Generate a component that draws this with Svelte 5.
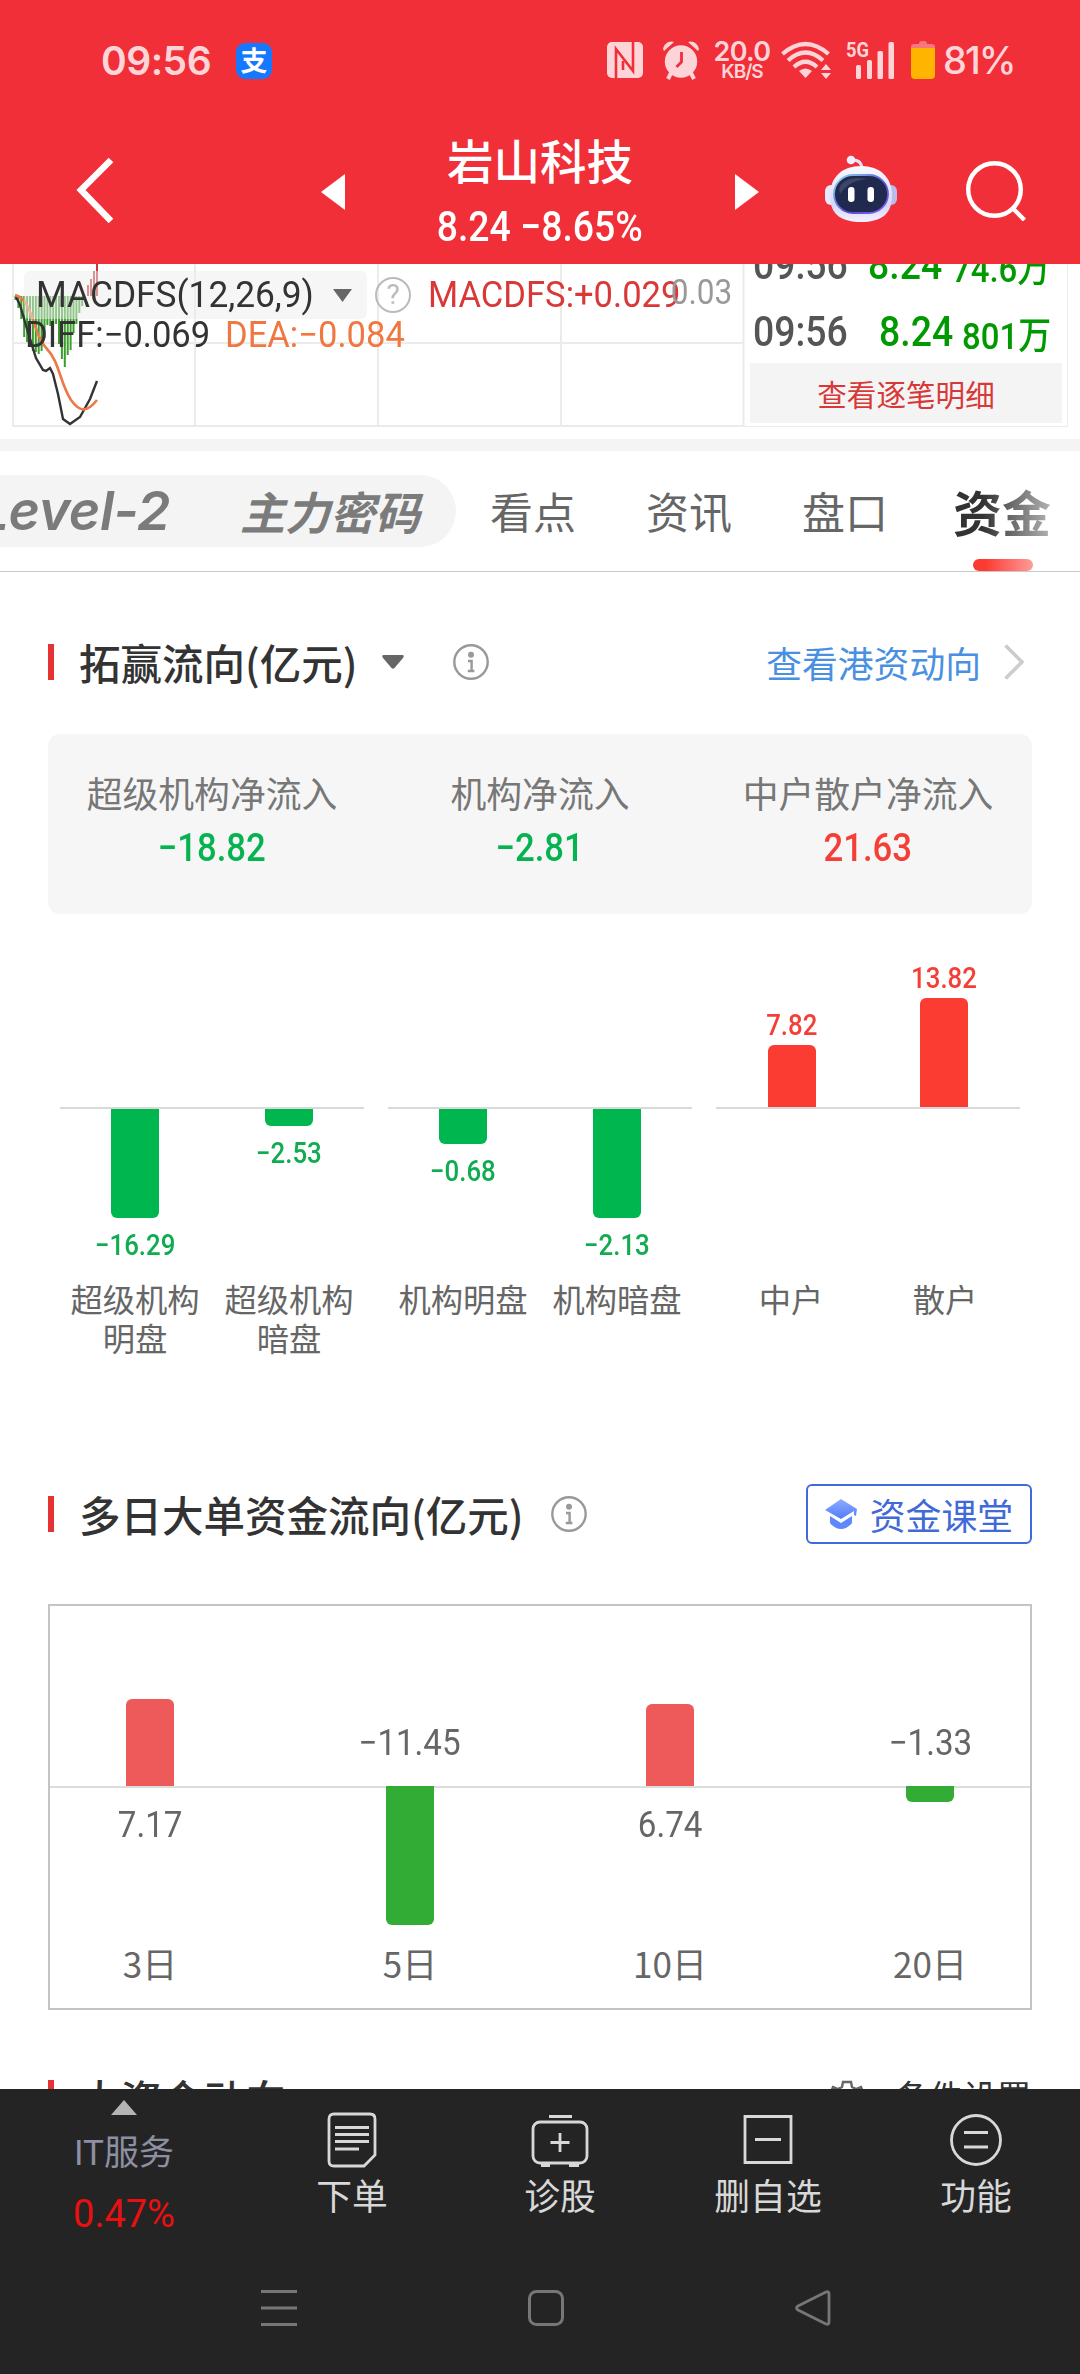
<script lang="ts">
    const ticks = [
        { time: '09:56', price: '8.24', volume: '74.6万' },
        { time: '09:56', price: '8.24', volume: '801万' }
    ];

    const tabs = ['看点', '资讯', '盘口'];

    const summary = [
        { label: '超级机构净流入', value: '−18.82', up: false },
        { label: '机构净流入', value: '−2.81', up: false },
        { label: '中户散户净流入', value: '21.63', up: true }
    ];

    // height is relative to the biggest bar of each group
    const groups = [
        [
            { name: '超级机构明盘', value: '−16.29', height: 109, up: false },
            { name: '超级机构暗盘', value: '−2.53', height: 17, up: false }
        ],
        [
            { name: '机构明盘', value: '−0.68', height: 35, up: false },
            { name: '机构暗盘', value: '−2.13', height: 109, up: false }
        ],
        [
            { name: '中户', value: '7.82', height: 62, up: true },
            { name: '散户', value: '13.82', height: 109, up: true }
        ]
    ];

    const days = [
        { name: '3日', value: '7.17', height: 87, up: true },
        { name: '5日', value: '−11.45', height: 139, up: false },
        { name: '10日', value: '6.74', height: 82, up: true },
        { name: '20日', value: '−1.33', height: 16, up: false }
    ];

    const greenBars = [4, 12, 23, 41, 46, 50, 55, 56, 58, 55, 42, 29, 30, 28, 28, 48, 63, 71, 59, 54, 37, 28, 17, 10];
    const redBars = [11, 17, 25, 40];
</script>

{#snippet info()}
    <svg class="info" width="36" height="36" viewBox="0 0 36 36" fill="none" stroke="#999">
        <circle cx="18" cy="18" r="16.7" stroke-width="2.4" />
        <circle cx="18" cy="10.8" r="3" fill="#999" stroke="none" />
        <path d="M15 17h3.6v10M14.8 27h6.6" stroke-width="2.4" />
    </svg>
{/snippet}

<div class="app">
    <header>
        <div class="status">
            <span class="clock">09:56</span>
            <span class="alipay">支</span>
            <div class="status-right">
                <svg width="36" height="38" viewBox="0 0 36 38">
                    <rect y="1" width="36" height="36" rx="5" fill="#fdd5d8" />
                    <path d="M9 37V8l17 22V14M26 1v29M9 8v29" fill="none" stroke="#f12f38" stroke-width="2.6" />
                    <path d="M16 20v9" stroke="#f12f38" stroke-width="2.6" />
                </svg>
                <svg class="alarm" width="38" height="40" viewBox="0 0 38 40" fill="#fdd5d8">
                    <circle cx="19" cy="21.5" r="16.2" />
                    <path d="M1 9C2 4 7 0 12 2L2 11zM37 9C36 4 31 0 26 2l10 9z" />
                    <path d="M9 33l-3 6M29 33l3 6" stroke="#fdd5d8" stroke-width="4" />
                    <path d="M19.500 12v10l-5 5" fill="none" stroke="#f12f38" stroke-width="2.800" />
                </svg>
                <div class="speed"><b>20.0</b><small>KB/S</small></div>
                <svg class="wifi" width="52" height="38" viewBox="0 0 52 38">
                    <g fill="none" stroke="#fdd5d8" stroke-width="4.200">
                        <path d="M1.500 13Q24.500-7 47.500 13" />
                        <path d="M7 19.500Q24.500 3.500 42 19.500" />
                        <path d="M13 26Q24.500 15.500 36 26" />
                    </g>
                    <path d="M24.500 37l-6.500-7q6.500-5 13 0z" fill="#fdd5d8" />
                    <path d="M40 29l5-6 5 6zM40 32l5 6 5-6z" fill="#fdd5d8" />
                </svg>
                <svg class="signal" width="49" height="38" viewBox="0 0 49 38" fill="#fdd5d8">
                    <text x="0" y="15.500" font-size="20" font-weight="700" textLength="23" lengthAdjust="spacingAndGlyphs">5G</text>
                    <rect x="10" y="24" width="5" height="14" rx="1.500" />
                    <rect x="21" y="19" width="5" height="19" rx="1.500" />
                    <rect x="31.500" y="10" width="5.500" height="28" rx="1.500" />
                    <rect x="42.500" y="1" width="5.500" height="37" rx="1.500" />
                </svg>
                <svg class="battery" width="24" height="38" viewBox="0 0 24 38">
                    <path d="M0 10V6q0-3 3-3h5q0-3 3-3h2q3 0 3 3h5q3 0 3 3v4z" fill="#f8777c" />
                    <path d="M0 7h24v27q0 4-4 4H4q-4 0-4-4z" fill="#ffb400" />
                </svg>
                <span class="percent">81%</span>
            </div>
        </div>
        <div class="titlebar">
            <svg class="back" width="38" height="66" viewBox="0 0 38 66" fill="none" stroke="#fff" stroke-width="6.500">
                <path d="M35 3L5 33l30 31" />
            </svg>
            <svg class="prev" width="24" height="36" viewBox="0 0 24 36"><path d="M24 0v36L0 18z" fill="#fff" /></svg>
            <div class="stock">
                <h1>岩山科技</h1>
                <p><span class="num">8.24 −8.65%</span></p>
            </div>
            <svg class="next" width="24" height="36" viewBox="0 0 24 36"><path d="M0 0v36l24-18z" fill="#fff" /></svg>
            <svg class="robot" width="72" height="68" viewBox="0 0 72 68">
                <defs>
                    <linearGradient id="shell" x1="0" y1="0" x2="0" y2="1">
                        <stop offset="0" stop-color="#fafaff" />
                        <stop offset=".7" stop-color="#d5d8f5" />
                        <stop offset="1" stop-color="#f4f2ff" />
                    </linearGradient>
                    <linearGradient id="rim" x1="0" y1="0" x2="1" y2="1">
                        <stop offset="0" stop-color="#8fdcf0" />
                        <stop offset=".6" stop-color="#5a4bd8" />
                        <stop offset="1" stop-color="#8b5cf0" />
                    </linearGradient>
                </defs>
                <path d="M26 5q10-1 11 8" fill="none" stroke="#e4e2fa" stroke-width="3" />
                <circle cx="26" cy="5" r="4.300" fill="#eeeefc" />
                <rect x="0" y="30" width="14" height="20" rx="6" fill="#e6e8fc" />
                <rect x="58" y="30" width="14" height="20" rx="6" fill="#b9bce8" />
                <path d="M36 11C55 11 67 22 67 41S55 67 36 67 5 60 5 41 17 11 36 11z" fill="url(#shell)" />
                <rect x="9" y="20" width="54" height="38" rx="19" fill="#202a4e" stroke="url(#rim)" stroke-width="1.800" />
                <path d="M14 34q3-10 17-11l14 1q-20 0-30 15z" fill="#4a5272" opacity=".7" />
                <rect x="23" y="32" width="6.500" height="15" rx="3.200" fill="#fff" />
                <rect x="42.500" y="32" width="6.500" height="15" rx="3.200" fill="#fff" />
            </svg>
            <svg class="search" width="60" height="60" viewBox="0 0 60 60" fill="none" stroke="#fff" stroke-width="4.400">
                <circle cx="28.500" cy="28.500" r="26.300" />
                <path d="M46.500 47l12 12" />
            </svg>
        </div>
    </header>

    <main>
        <section class="market">
            <div class="macd">
                <svg class="plot" width="750" height="163" viewBox="0 0 750 163" fill="none">
                    <path d="M13 79h730M12 162h732M13 0v163M195 0v163M378 0v163M561 0v163M743.500 0v163" stroke="#ebebeb" stroke-width="2" />
                    {#each greenBars as bar, i}
                        <path d="M{15.500 + i * 2.9} 32v{bar}" stroke="#3a9d2c" stroke-width="2" />
                    {/each}
                    {#each redBars as bar, i}
                        <path d="M{88 + i * 3} 32v-{bar}" stroke="#cc3636" stroke-width="2" />
                    {/each}
                    <path d="M16 33L20 41L27 65L36 94L43 106L46 107L50 104L53 110L58 130L63 155L70 160L80 153L90 135L97 117" stroke="#333" stroke-width="2.400" />
                    <path d="M15 31Q23 33 28 43C36 61 37 74 47 85C59 97 60 119 71 136C79 147 86 150 97 136" stroke="#ec7a47" stroke-width="2.600" />
                </svg>
                <div class="legend">
                    <div class="legend-row">
                        <div class="picker">
                            <span class="macd-name">MACDFS(12,26,9)</span>
                            <svg width="19" height="13" viewBox="0 0 19 13"><path d="M0 0h19L9.500 13z" fill="#666" /></svg>
                        </div>
                        <span class="help">?</span>
                        <span class="macd-value">MACDFS:+0.029</span>
                    </div>
                    <div class="legend-row second">
                        <span class="diff">DIFF:−0.069</span>
                        <span class="dea">DEA:−0.084</span>
                    </div>
                </div>
                <span class="axis-max">0.03</span>
            </div>
            <div class="ticks">
                {#each ticks as tick}
                    <div class="tick">
                        <span class="tick-time">{tick.time}</span>
                        <span class="tick-price">{tick.price}</span>
                        <span class="tick-volume">{tick.volume}</span>
                    </div>
                {/each}
                <button class="detail">查看逐笔明细</button>
            </div>
        </section>

        <nav class="tabs">
            <div class="pill">
                <span class="level">Level-2</span>
                <span class="code">主力密码</span>
            </div>
            {#each tabs as tab}
                <span class="tab">{tab}</span>
            {/each}
            <span class="tab active"><span>资金</span></span>
        </nav>

        <section class="flow">
            <div class="head">
                <h2>拓赢流向(亿元)</h2>
                <svg class="caret" width="22" height="14" viewBox="0 0 22 14"><path d="M2 0h18q3 0 1 3l-8.500 10q-1.500 1.500-3 0L1 3q-2-3 1-3z" fill="#666" /></svg>
                {@render info()}
                <a class="more" href="#flow">查看港资动向</a>
                <svg class="arrow" width="21" height="36" viewBox="0 0 21 36" fill="none" stroke="#ccc" stroke-width="3.600">
                    <path d="M1.500 1.500L18 18 1.500 34.500" />
                </svg>
            </div>
            <div class="card">
                {#each summary as item}
                    <div class="cell">
                        <span class="cell-label">{item.label}</span>
                        <span class="cell-value" class:up={item.up}>{item.value}</span>
                    </div>
                {/each}
            </div>
            <div class="groups">
                {#each groups as group}
                    <div class="group">
                        {#each group as bar}
                            <div class="item">
                                <div class="upper">
                                    {#if bar.up}
                                        <span class="bar-value">{bar.value}</span>
                                        <i style:height="{bar.height}px"></i>
                                    {/if}
                                </div>
                                <div class="lower">
                                    {#if !bar.up}
                                        <i style:height="{bar.height}px"></i>
                                        <span class="bar-value">{bar.value}</span>
                                    {/if}
                                </div>
                                <span class="bar-name">{bar.name}</span>
                            </div>
                        {/each}
                    </div>
                {/each}
            </div>
        </section>

        <section class="multi">
            <div class="head">
                <h2>多日大单资金流向(亿元)</h2>
                {@render info()}
                <button class="course">
                    <svg width="34" height="32" viewBox="0 0 34 32">
                        <defs>
                            <linearGradient id="cap" x1="0" y1="0" x2="0" y2="1">
                                <stop offset="0" stop-color="#8fadff" />
                                <stop offset="1" stop-color="#4f7cff" />
                            </linearGradient>
                        </defs>
                        <path d="M17 1l16 10-1 7-2-1v-4L17 21 1 12z" fill="url(#cap)" />
                        <path d="M6 18l11 7 11-7v7q-5 6-11 6T6 25z" fill="#5e88fb" />
                    </svg>
                    资金课堂
                </button>
            </div>
            <div class="frame">
                {#each days as day}
                    <div class="item">
                        <div class="upper">
                            {#if day.up}
                                <i style:height="{day.height}px"></i>
                            {:else}
                                <span class="day-value">{day.value}</span>
                            {/if}
                        </div>
                        <div class="lower">
                            {#if day.up}
                                <span class="day-value">{day.value}</span>
                            {:else}
                                <i style:height="{day.height}px"></i>
                            {/if}
                        </div>
                        <span class="day-name">{day.name}</span>
                    </div>
                {/each}
            </div>
        </section>

        <section class="big">
            <div class="head">
                <h2>大资金动向</h2>
                <svg class="gear" width="34" height="36" viewBox="0 0 34 36" fill="none" stroke="#666" stroke-width="2.400">
                    <path d="M13 2h8l1 5 4 2 5-2 3 7-4 4 4 4-3 7-5-2-4 2-1 5h-8l-1-5-4-2-5 2-3-7 4-4-4-4 3-7 5 2 4-2z" />
                    <circle cx="17" cy="18" r="5" />
                </svg>
                <span class="setting">条件设置</span>
            </div>
        </section>
    </main>

    <footer>
        <div class="toolbar">
            <div class="index">
                <svg width="26" height="15" viewBox="0 0 26 15"><path d="M13 0l13 15H0z" fill="#b4b4b4" /></svg>
                <span class="index-name">IT服务</span>
                <span class="index-value">0.47%</span>
            </div>
            <div class="tool">
                <svg width="58" height="56" viewBox="0 0 58 56" fill="none" stroke="#d8d8d8" stroke-width="2.800">
                    <path d="M11 2h36q5 0 5 5v36l-11 11H11q-5 0-5-5V7q0-5 5-5z" />
                    <path d="M12 15.500h34M12 22.500h34M12 29.500h34M12 37h24" />
                </svg>
                <span>下单</span>
            </div>
            <div class="tool">
                <svg width="58" height="56" viewBox="0 0 58 56" fill="none" stroke="#d8d8d8" stroke-width="2.800">
                    <rect x="2" y="10" width="54" height="41" rx="7" />
                    <path d="M18 4.500h23M29 21v19M19.500 30.500h19M10 53.500h9M38 53.500h10" />
                </svg>
                <span>诊股</span>
            </div>
            <div class="tool">
                <svg width="58" height="56" viewBox="0 0 58 56" fill="none" stroke="#d8d8d8" stroke-width="2.800">
                    <path d="M6 4.500h46v46H6zM16 27.500h26" />
                </svg>
                <span>删自选</span>
            </div>
            <div class="tool">
                <svg width="58" height="56" viewBox="0 0 58 56" fill="none" stroke="#d8d8d8" stroke-width="2.800">
                    <circle cx="29" cy="28" r="24.500" />
                    <path d="M17 20.500h24M17 35h24" />
                </svg>
                <span>功能</span>
            </div>
        </div>
        <div class="system">
            <svg width="36" height="36" viewBox="0 0 36 36" stroke="#777" stroke-width="3"><path d="M0 1.500h36M0 18h36M0 34.500h36" /></svg>
            <svg width="36" height="36" viewBox="0 0 36 36" fill="none" stroke="#777" stroke-width="3"><rect x="1.500" y="1.500" width="33" height="33" rx="7" /></svg>
            <svg width="36" height="36" viewBox="0 0 36 36" fill="none" stroke="#777" stroke-width="2.800" stroke-linejoin="round"><path d="M31 2q3-1 3 2v28q0 3-3 2L3 20q-3-2 0-4z" /></svg>
        </div>
    </footer>
</div>

<style>
    :global(body) {
        margin: 0;
        background: #fff;
    }

    .app {
        width: 1080px;
        height: 2374px;
        overflow: hidden;
        color: #333;
        font-family: Roboto, "Noto Sans CJK SC", sans-serif;
    }

    h1, h2, p {
        margin: 0;
        font-weight: 500;
    }

    svg {
        display: block;
        flex: none;
    }

    button {
        padding: 0;
        font-family: inherit;
    }

    .app span {
        white-space: nowrap;
    }

    header {
        height: 264px;
        background: #f12f38;
        color: #fff;
    }

    .status {
        display: flex;
        align-items: center;
        height: 120px;
        padding: 0 67px 0 101px;
        color: #fdd5d8;
    }

    .clock {
        width: 135px;
        font: 600 39px/1 Inter, sans-serif;
        letter-spacing: -0.5px;
    }

    .alipay {
        width: 36px;
        height: 36px;
        margin-top: 2px;
        border-radius: 9px;
        background: #1677ff;
        color: #fff;
        font: 700 27px/33px "Noto Sans CJK SC", sans-serif;
        text-align: center;
    }

    .status-right {
        display: flex;
        align-items: center;
        margin-left: auto;
    }

    .alarm {
        margin-left: 19px;
    }

    .speed {
        display: flex;
        flex-direction: column;
        align-items: center;
        width: 60px;
        margin-left: 12px;
        font-family: Inter, sans-serif;
        line-height: 20px;
    }

    .speed b {
        font-size: 27px;
        font-weight: 600;
        letter-spacing: -0.6px;
        line-height: 22px;
    }

    .speed small {
        font-size: 19px;
        font-weight: 600;
        letter-spacing: -1px;
        line-height: 17px;
    }

    .wifi {
        margin-left: 9px;
    }

    .signal {
        margin-left: 13px;
    }

    .battery {
        margin: 0 8px 0 16px;
    }

    .percent {
        width: 70px;
        font: 500 38px/1 Inter, sans-serif;
        letter-spacing: -2px;
    }

    .titlebar {
        display: flex;
        align-items: center;
        height: 144px;
        padding: 0 54px 0 76px;
    }

    .back {
        margin-top: -4px;
    }

    .prev {
        margin-left: 207px;
    }

    .stock {
        width: 390px;
        text-align: center;
    }

    .stock h1 {
        margin-top: 4px;
        font-size: 46.5px;
        line-height: 66px;
    }

    .stock p {
        font-size: 42px;
        line-height: 62px;
        white-space: nowrap;
    }

    .num {
        display: inline-block;
        transform: scaleX(0.89);
    }

    .robot {
        margin: -6px 0 0 66px;
    }

    .search {
        margin: -2px 0 0 69px;
    }

    main {
        height: 1825px;
        overflow: hidden;
    }

    .market {
        display: flex;
        height: 163px;
        padding-bottom: 12px;
        border-bottom: 12px solid #f4f4f4;
    }

    .macd {
        position: relative;
        width: 744px;
    }

    .plot,
    .legend {
        position: absolute;
        top: 0;
        left: 0;
    }

    .legend {
        padding: 7px 0 0 24px;
    }

    .legend-row {
        display: flex;
        align-items: center;
        height: 48px;
        font-size: 36px;
    }

    .legend-row span {
        transform-origin: left;
    }

    .picker {
        display: flex;
        align-items: center;
        justify-content: space-between;
        box-sizing: border-box;
        width: 343px;
        height: 48px;
        padding: 0 15px 0 12px;
        border-radius: 6px;
        background: rgba(238, 238, 238, 0.5);
    }

    .macd-name {
        width: 287px;
        transform: scaleX(0.98);
    }

    .help {
        box-sizing: border-box;
        width: 36px;
        height: 36px;
        margin: 0 17px 0 8px;
        border: 2.5px solid #bbb;
        border-radius: 50%;
        color: #bbb;
        font-size: 28px;
        line-height: 32px;
        text-align: center;
    }

    .macd-value {
        color: #d93838;
        transform: scaleX(0.96);
    }

    .second {
        height: 34px;
        margin-top: -1px;
    }

    .diff {
        width: 200px;
        margin-left: 1px;
        transform: scaleX(0.96);
    }

    .dea {
        color: #f07840;
        transform: scaleX(0.96);
    }

    .axis-max {
        position: absolute;
        top: 8px;
        right: 12px;
        color: #999;
        font-size: 35px;
        transform: scaleX(0.9);
        transform-origin: right;
    }

    .ticks {
        display: flex;
        flex-direction: column;
        justify-content: flex-end;
        box-sizing: border-box;
        width: 324px;
        padding: 0 5px 3px 6px;
        border: solid #ebebeb;
        border-width: 0 1px 1px 0;
        overflow: hidden;
    }

    .tick {
        display: flex;
        flex: none;
        align-items: center;
        height: 67px;
        padding-left: 3px;
        font-size: 42px;
        font-weight: 500;
    }

    .tick span {
        transform: scaleX(0.89);
        transform-origin: left;
    }

    .tick-time {
        width: 128px;
        color: #555;
    }

    .tick-price {
        width: 85px;
        color: #009900;
    }

    .tick-volume {
        margin-top: 3px;
        color: #009900;
        font-size: 37px;
    }

    .detail {
        flex: none;
        height: 60px;
        margin-top: -2px;
        border: 0;
        background: #f4f4f4;
        color: #d93838;
        font-size: 29.6px;
    }

    .tabs {
        display: flex;
        align-items: center;
        height: 120px;
        border-bottom: 1px solid #c8c8c8;
        color: #666;
        font-size: 43px;
    }

    .pill {
        display: flex;
        align-items: center;
        justify-content: flex-end;
        box-sizing: border-box;
        width: 456px;
        height: 72px;
        margin-right: 34px;
        padding-right: 36px;
        border-radius: 0 36px 36px 0;
        background: #f4f4f4;
        color: #7b7b7b;
        font-style: italic;
        font-weight: 700;
    }

    .level {
        font: italic 600 54px/1 Inter, sans-serif;
        letter-spacing: -0.5px;
    }

    .code {
        margin: -2px 0 0 70px;
        font-size: 45px;
    }

    .tab {
        position: relative;
        width: 87px;
        margin: -2px 69px 0 0;
    }

    .tab.active {
        margin: -2px 0 0 -5px;
        font-size: 49px;
        font-weight: 700;
    }

    .tab.active span {
        background: linear-gradient(90deg, #333 30%, #aaa 95%);
        background-clip: text;
        color: transparent;
    }

    .tab.active::after {
        content: "";
        position: absolute;
        bottom: -25px;
        left: 20px;
        width: 60px;
        height: 12px;
        border-radius: 6px;
        background: linear-gradient(90deg, #fb3a32 20%, #ff9c98);
    }

    .flow,
    .multi,
    .big {
        padding: 0 48px;
    }

    .head {
        display: flex;
        align-items: center;
    }

    .head h2 {
        display: flex;
        align-items: center;
        height: 36px;
        padding-left: 25px;
        border-left: 6px solid #e53333;
        font: 500 41.5px/36px "Noto Sans CJK SC", sans-serif;
    }

    .flow .head {
        height: 144px;
        padding-top: 18px;
    }

    .caret {
        margin: 0 49px 0 24px;
    }

    .more {
        margin: 0 23px 0 auto;
        color: #4a90e2;
        font-size: 35.8px;
        text-decoration: none;
    }

    .arrow {
        margin-right: 7px;
    }

    .card {
        display: grid;
        grid-template-columns: repeat(3, 1fr);
        height: 180px;
        border-radius: 12px;
        background: #f6f6f6;
    }

    .cell {
        display: flex;
        flex-direction: column;
        align-items: center;
        padding-top: 37px;
    }

    .cell-label {
        color: #777;
        font-size: 35.8px;
        line-height: 50px;
    }

    .cell-value {
        color: #07b351;
        font-size: 39px;
        font-weight: 500;
        line-height: 54px;
        transform: scaleX(0.89);
    }

    .cell-value.up {
        color: #f53f36;
    }

    .groups {
        display: flex;
        gap: 20px;
        padding: 0 10px;
    }

    .group {
        display: flex;
        flex: 1;
    }

    .groups .item {
        display: flex;
        flex: 1;
        flex-direction: column;
        align-items: center;
    }

    .upper,
    .lower {
        display: flex;
        flex-direction: column;
        align-items: center;
        width: 100%;
    }

    .upper {
        justify-content: flex-end;
    }

    i {
        width: 48px;
    }

    .upper i {
        border-radius: 6px 6px 0 0;
        background: #fb3c32;
    }

    .lower i {
        border-radius: 0 0 6px 6px;
        background: #00b64f;
    }

    .groups .upper {
        width: 152px;
        height: 193px;
        border-bottom: 2px solid #d9d9d9;
    }

    .groups .item:first-child .upper {
        align-self: flex-end;
    }

    .groups .item:last-child .upper {
        align-self: flex-start;
    }

    .groups .lower {
        height: 173px;
    }

    .bar-value {
        margin-bottom: 2px;
        color: #f53f36;
        font-size: 29px;
        font-weight: 500;
        line-height: 36px;
        transform: scaleX(0.89);
    }

    .lower .bar-value {
        margin-top: 9px;
        color: #10ac52;
    }

    .groups .bar-name {
        width: 131px;
        color: #666;
        font-size: 32.3px;
        line-height: 39px;
        text-align: center;
        white-space: normal;
    }

    .multi .head {
        height: 60px;
        margin: 124px 0 60px;
    }

    .multi .info {
        margin-left: 27px;
    }

    .course {
        display: flex;
        align-items: center;
        gap: 12px;
        height: 60px;
        margin-left: auto;
        padding: 0 17px 0 16px;
        border: 2px solid #3f6ad8;
        border-radius: 6px;
        background: #fff;
        color: #3f6ad8;
        font-size: 35.8px;
    }

    .frame {
        display: flex;
        gap: 60px;
        box-sizing: border-box;
        height: 406px;
        border: 2px solid #c4c4c4;
        background: linear-gradient(#dcdcdc, #dcdcdc) 0 180px / 100% 2px no-repeat;
    }

    .frame .item {
        display: flex;
        flex-direction: column;
        align-items: center;
        width: 200px;
    }

    .frame .upper {
        height: 180px;
    }

    .frame .lower {
        height: 154px;
    }

    .frame .upper i {
        background: #ee5a5a;
    }

    .frame .lower i {
        background: #33ac36;
    }

    .day-value {
        color: #666;
        font-size: 36px;
        line-height: 44px;
        transform: scaleX(0.92);
    }

    .upper .day-value {
        margin-bottom: 21px;
    }

    .lower .day-value {
        margin-top: 17px;
    }

    .day-name {
        color: #666;
        font-family: "Noto Sans CJK SC", sans-serif;
        font-size: 35px;
        line-height: 46px;
    }

    .big .head {
        margin-top: 70px;
    }

    .gear {
        margin: 0 31px 0 auto;
    }

    .setting {
        margin-right: 1px;
        font-size: 34px;
        line-height: 36px;
    }

    footer {
        height: 285px;
        background: #242424;
        color: #d8d8d8;
    }

    .toolbar {
        display: flex;
        height: 183px;
        padding-left: 20px;
    }

    .index {
        display: flex;
        flex-direction: column;
        align-items: center;
        width: 208px;
        margin-right: 20px;
        padding-top: 11px;
    }

    .index-name {
        margin-top: 15px;
        color: #8d8fa3;
        font-size: 35px;
        line-height: 48px;
    }

    .index-value {
        margin-top: 12px;
        color: #e81010;
        font-size: 38px;
        line-height: 48px;
    }

    .tool {
        display: flex;
        flex-direction: column;
        align-items: center;
        width: 208px;
        padding-top: 23px;
        font-size: 35.8px;
    }

    .tool span {
        line-height: 54px;
        margin-top: 3px;
    }

    .system {
        display: flex;
        gap: 231px;
        padding: 18px 0 0 261px;
    }
</style>
